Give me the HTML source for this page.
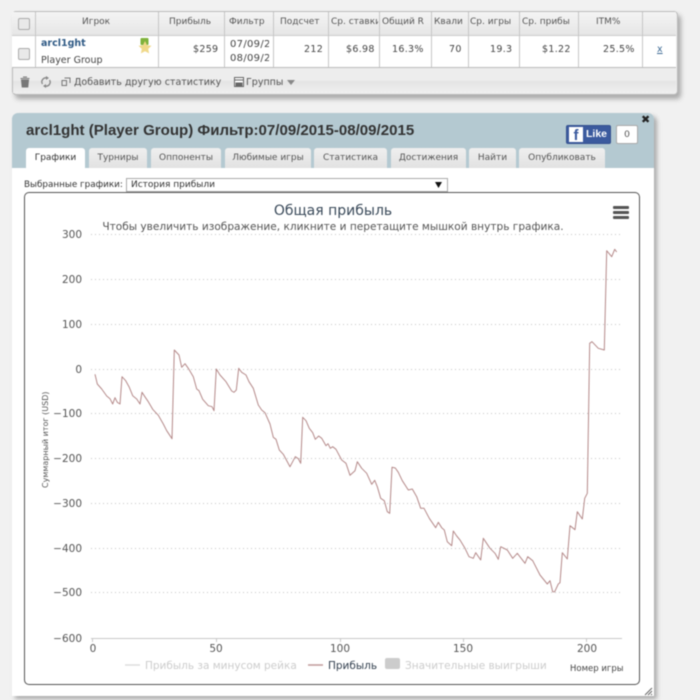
<!DOCTYPE html>
<html><head><meta charset="utf-8">
<style>
html,body{margin:0;padding:0;width:700px;height:700px;overflow:hidden;background:#f1f1f1}
body{font-family:"DejaVu Sans","Liberation Sans",sans-serif;position:relative;color:#444}
#w{position:absolute;left:0;top:0;width:700px;height:700px;filter:blur(0.4px)}
.a{position:absolute;white-space:nowrap}
#tb{position:absolute;left:12px;top:11px;width:664px;height:82px;background:#ececec;border:1px solid #bbb;border-radius:4px;box-shadow:3px 4px 5px #aaa;overflow:hidden}
.hd{position:absolute;left:12px;top:12px;width:664px;height:23px;background:linear-gradient(#f4f4f4,#e6e6e6)}
.rw{position:absolute;left:12px;top:36px;width:664px;height:31px;background:#fff;}
.ft{position:absolute;left:13px;top:68px;width:663px;height:25px;background:linear-gradient(#ededed 50%,#e4e4e4 52%,#efefef)}
.vl{position:absolute;top:12px;height:55px;width:1px;background:#c6c6c6}
.th{position:absolute;top:12px;height:20px;line-height:20px;font-size:9px;color:#555;white-space:nowrap;overflow:hidden}
.td{position:absolute;top:44px;font-size:9.5px;color:#444;white-space:nowrap;letter-spacing:.3px}
.cb{position:absolute;left:18px;width:10px;height:10px;border:1px solid #aaa;border-radius:2px;background:#e9e9e9}
#pn{position:absolute;left:12px;top:113px;width:642px;height:583px;background:#fff;border-radius:6px 6px 0 0;box-shadow:3px 3px 4px #aaa}
#ph{position:absolute;left:12px;top:113px;width:642px;height:55px;background:#b4c9d1;border-radius:6px 6px 0 0}
.tab{position:absolute;top:148px;height:20px;line-height:21px;text-align:center;font-size:9px;color:#555;background:linear-gradient(#efefef,#e2e2e2);border-radius:3px 3px 0 0;white-space:nowrap}
</style></head><body><div id="w">
<div id="tb"></div>
<div class="hd"></div>
<div class="rw"></div>
<div class="ft"></div>
<div class="a" style="left:12px;top:35px;width:664px;height:1px;background:#ccc"></div>
<div class="a" style="left:12px;top:67px;width:664px;height:1px;background:#bbb"></div>
<div class="vl" style="left:35px"></div><div class="vl" style="left:158px"></div><div class="vl" style="left:224px"></div><div class="vl" style="left:273px"></div><div class="vl" style="left:328px"></div><div class="vl" style="left:379px"></div><div class="vl" style="left:431px"></div><div class="vl" style="left:468px"></div><div class="vl" style="left:519px"></div><div class="vl" style="left:578px"></div><div class="vl" style="left:642px"></div>
<div class="cb" style="top:18px"></div><div class="cb" style="top:48px"></div>
<div class="th" style="left:82px">Игрок</div>
<div class="th" style="left:169px">Прибыль</div>
<div class="th" style="left:229px">Фильтр</div>
<div class="th" style="left:280px">Подсчет</div>
<div class="th" style="left:331px;width:47px">Ср. ставки</div>
<div class="th" style="left:382px;width:48px">Общий R</div>
<div class="th" style="left:434px;width:33px">Квали</div>
<div class="th" style="left:470px;width:48px">Ср. игры</div>
<div class="th" style="left:522px;width:55px">Ср. прибы</div>
<div class="th" style="left:596px">ITM%</div>
<div class="a" style="left:41px;top:38px;font-size:9.5px;font-weight:bold;color:#2f5a85">arcl1ght</div>
<div class="a" style="left:41px;top:55px;font-size:9.500px;color:#444">Player Group</div>
<svg class="a" style="left:138px;top:37px" width="14" height="17"><rect x="2.500" y="1" width="8" height="7" rx="1" fill="#7fb23c"/><path d="M7 4l2 4.200 4.500.6-3.300 3.100.9 4.500L7 14.200l-4.100 2.200.9-4.500L.5 8.800 5 8.200z" fill="#f0d98a"/></svg>
<div class="td" style="left:193px">$259</div>
<div class="a" style="left:230px;top:38px;width:39px;overflow:hidden;font-size:10px;line-height:14px;letter-spacing:.3px;color:#444">07/09/2015<br>08/09/2015</div>
<div class="td" style="left:304px">212</div>
<div class="td" style="left:346px">$6.98</div>
<div class="td" style="left:392px">16.3%</div>
<div class="td" style="left:449px">70</div>
<div class="td" style="left:490px">19.3</div>
<div class="td" style="left:542px">$1.22</div>
<div class="td" style="left:603px">25.5%</div>
<div class="a" style="left:657px;top:44px;font-size:9.5px;color:#3d6a94;text-decoration:underline">x</div>
<svg class="a" style="left:19px;top:76px" width="12" height="12"><path d="M1.500 2.500h9M4 1h4M2.500 4h7l-.7 7H3.200z" fill="#777" stroke="#777" stroke-width="1"/></svg>
<svg class="a" style="left:40px;top:76px" width="12" height="12"><path d="M2.500 8A4 4 0 0 1 7 2M9.500 4A4 4 0 0 1 5 10" fill="none" stroke="#888" stroke-width="1.300"/><path d="M6 0l3 2-3 2zM6 12L3 10l3-2z" fill="#888"/></svg>
<svg class="a" style="left:61px;top:77px" width="10" height="10"><path d="M3.500 1h5.500v5M1 3.500h4.500v5H1z" fill="none" stroke="#777"/></svg>
<div class="a" style="left:74px;top:77px;font-size:9.5px;color:#555">Добавить другую статистику</div>
<svg class="a" style="left:234px;top:77px" width="10" height="10"><rect x=".5" y=".5" width="9" height="9" fill="#fff" stroke="#666"/><path d="M0 3h10M2 6h6v4H2z" fill="#666" stroke="#666"/></svg>
<div class="a" style="left:246px;top:77px;font-size:9.5px;color:#555">Группы</div>
<svg class="a" style="left:287px;top:80px" width="8" height="5"><path d="M0 0h8L4 5z" fill="#888"/></svg>

<div id="pn"></div><div id="ph"></div>
<div class="a" style="left:26px;top:122px;font:bold 15.050px 'Liberation Sans',sans-serif;color:#333">arcl1ght (Player Group) Фильтр:07/09/2015-08/09/2015</div>
<div class="a" style="left:566px;top:125px;width:45px;height:19px;background:#3b5a9e;border-radius:2px;border:1px solid #34508f;box-sizing:border-box"></div>
<div class="a" style="left:569px;top:127px;width:14px;height:15px;background:#fff;color:#3b5a9e;font:bold 15px/17px 'Liberation Sans',sans-serif;text-align:center">f</div>
<div class="a" style="left:586px;top:128px;font:bold 10.5px 'Liberation Sans',sans-serif;color:#fff">Like</div>
<div class="a" style="left:616px;top:125px;width:22px;height:19px;background:#fff;border:1px solid #aaa;border-radius:2px;box-sizing:border-box;text-align:center;font:9.5px/17px 'Liberation Sans',sans-serif;color:#444">0</div>
<div class="a" style="left:641px;top:113px;font:bold 11px 'DejaVu Sans',sans-serif;color:#222">✖</div>
<div class="tab" style="left:26px;width:59px;background:#fff;color:#333;height:21px">Графики</div>
<div class="tab" style="left:89px;width:58px">Турниры</div>
<div class="tab" style="left:151px;width:70px">Оппоненты</div>
<div class="tab" style="left:225px;width:86px">Любимые игры</div>
<div class="tab" style="left:314px;width:73px">Статистика</div>
<div class="tab" style="left:391px;width:75px">Достижения</div>
<div class="tab" style="left:469px;width:47px">Найти</div>
<div class="tab" style="left:519px;width:86px">Опубликовать</div>
<div class="a" style="left:24px;top:180px;font-size:8.800px;color:#333">Выбранные графики:</div>
<div class="a" style="left:126px;top:178px;width:322px;height:14px;background:#fff;border:1px solid #aaa;box-sizing:border-box;font-size:9px;line-height:13px;padding-left:4px;color:#333">История прибыли</div>
<svg class="a" style="left:435px;top:182px" width="7" height="6"><path d="M0 0h7L3.500 6z" fill="#111"/></svg>
<div class="a" style="left:24px;top:192px;width:616px;height:493px;border:1px solid #555;border-radius:5px;box-sizing:border-box;background:#fff"></div>

<svg class="a" style="left:0;top:0" width="700" height="700" font-family="'DejaVu Sans',sans-serif">
<text x="333" y="215" font-size="14" fill="#3a4a5a" text-anchor="middle">Общая прибыль</text>
<text x="333" y="230" font-size="10.570" fill="#555" text-anchor="middle">Чтобы увеличить изображение, кликните и перетащите мышкой внутрь графика.</text>
<g fill="#555"><rect x="613" y="206" width="16" height="3" rx="1"/><rect x="613" y="211" width="16" height="3" rx="1"/><rect x="613" y="216" width="16" height="3" rx="1"/></g>
<g stroke="#c4c4c4" stroke-dasharray="1 3" stroke-width="1">
<path d="M91 234.500H622M91 279.500H622M91 324.500H622M91 369.500H622M91 413.500H622M91 458.500H622M91 503.500H622M91 548.500H622M91 592.500H622"/>
</g>
<path d="M91 638.500H622M92.500 638V642M216.500 638V642M340.500 638V642M463.500 638V642M586.500 638V642" stroke="#c8c8c8" fill="none"/>
<g font-size="10.500" fill="#555" text-anchor="end">
<text x="82" y="238">300</text><text x="82" y="283">200</text><text x="82" y="328">100</text><text x="82" y="373">0</text><text x="82" y="417">−100</text><text x="82" y="462">−200</text><text x="82" y="507">−300</text><text x="82" y="552">−400</text><text x="82" y="596">−500</text><text x="82" y="642">−600</text>
</g>
<g font-size="10.500" fill="#555" text-anchor="middle">
<text x="93" y="652">0</text><text x="216" y="652">50</text><text x="340" y="652">100</text><text x="463" y="652">150</text><text x="587" y="652">200</text>
</g>
<text transform="translate(48,488) rotate(-90)" font-size="8" fill="#555">Суммарный итог (USD)</text>
<path fill="none" stroke="#b58a8a" stroke-width="1" stroke-linejoin="round" d="M95 374.300L97.300 384L101.700 389L106.700 396L110 398.700L112.700 404L115 397.700L117.300 402.300L120 404L122 376.700L125.700 380.700L129.300 387.300L132.700 395.700L136.700 399L140 404L142 392.300L145.300 397.300L148.300 401.700L152.700 409.300L158.300 415.300L163.300 424L166.700 430.700L172 438.700L174.300 350L179 355L181.700 367.300L185 363.700L188.300 368.300L193.300 376.700L196.700 389L199 390.700L202.700 399.300L208.300 405.700L212 406.700L214 410.700L216.300 369L220 375L226 381.700L231.700 391L234 392.300L236.300 390L238.700 368.300L241.700 372.300L246 375L249 381.700L253.300 388.300L258.300 405L261.700 410L265 412.700L270 424L273.300 437.300L276 439.300L279.300 450L283.300 454.300L290 466.700L295.300 456.700L298.300 458.700L300.700 463.300L302.700 417.300L306 420.700L309.300 428.300L312.700 432.700L315.300 439.300L318.700 436L321.700 438.300L326 445.700L328 443.700L330.300 448.300L332.700 446.700L336 449.300L341.700 460L346 463.300L350 475.300L355 470.700L357.300 461.700L361.700 468.300L366.700 473.300L371.700 484.300L374.700 480.300L377.300 486.700L380.700 498.300L384.300 500.700L387.300 511.700L389.700 513.300L392 467.300L395.300 468L398.300 472.300L402.300 480.700L408.300 490L412.300 489L416.700 496.700L420.700 508.300L424 508.300L429.300 518.300L435.700 527.700L438.300 522.300L441.700 527.700L444.300 530L447.300 541.700L451.700 545.700L453.300 531L456.700 536L460 540L465 548.300L469 556.700L473.300 558.300L475.700 552.700L480.700 560L483.300 538.300L490 548.300L495 553.300L498.300 559.300L500.700 546.700L507.300 550L512.700 558.300L517.300 553.300L525 563.300L527.700 556.700L532.700 560.700L540 575L547.300 584L550 580.700L552.700 591.700L554.700 591.700L558.300 584L560 582.700L562.300 552.700L567.300 559L570 525.700L575 529.700L577.300 511.700L582.300 519L584.700 498.300L587.300 493.300L589.700 343.300L592 341.700L598.300 348.300L604.300 350L606.700 250.700L611.700 256.700L614.700 249.300L616.700 252"/>
<path d="M125 665h15" stroke="#ddd" stroke-width="1.500"/>
<text x="145" y="669" font-size="10.500" fill="#ccc">Прибыль за минусом рейка</text>
<path d="M308 665h15" stroke="#c09a9a" stroke-width="1.500"/>
<text x="328" y="669" font-size="10.500" fill="#33404f">Прибыль</text>
<rect x="385" y="658" width="15" height="11" rx="2" fill="#ccc"/>
<text x="405" y="669" font-size="10.500" fill="#ccc">Значительные выигрыши</text>
<text x="570" y="671" font-size="8.500" fill="#444">Номер игры</text>
<path d="M645 695l7-7M648 695l4-4M651 695l1-1" stroke="#666" stroke-width="1"/>
</svg>
</div></body></html>
